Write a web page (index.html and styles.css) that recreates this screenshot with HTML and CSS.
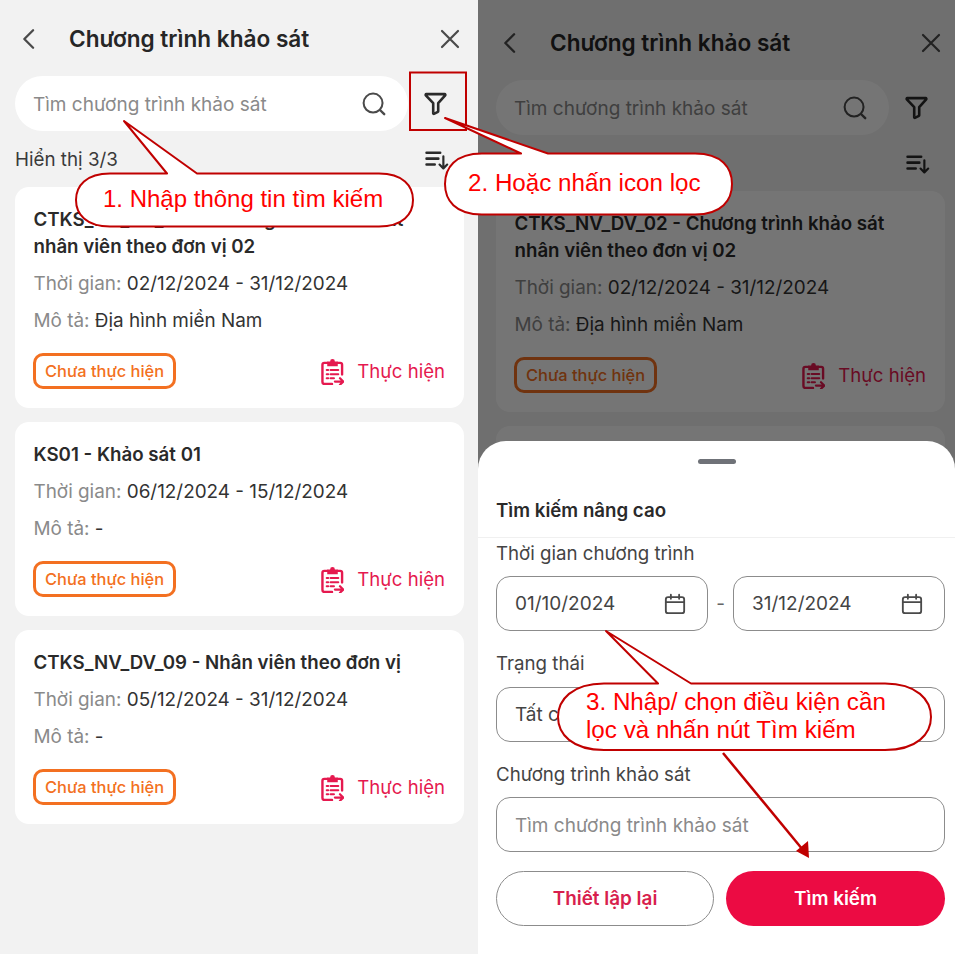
FILE: index.html
```html
<!DOCTYPE html>
<html lang="vi">
<head>
<meta charset="utf-8">
<title>Chương trình khảo sát</title>
<link rel="stylesheet" href="styles.css">
</head>
<body>
<svg class="defs" width="0" height="0" aria-hidden="true">
  <symbol id="i-back" viewBox="0 0 24 24"><path d="M15.5 4.5 8 12l7.5 7.5" fill="none" stroke="currentColor" stroke-width="2" stroke-linecap="round" stroke-linejoin="round"/></symbol>
  <symbol id="i-close" viewBox="0 0 24 24"><path d="M4 4l16 16M20 4 4 20" fill="none" stroke="currentColor" stroke-width="2.2" stroke-linecap="round"/></symbol>
  <symbol id="i-search" viewBox="0 0 28 28"><circle cx="13" cy="13" r="10.2" fill="none" stroke="currentColor" stroke-width="2.2"/><path d="M21 21l4 4" fill="none" stroke="currentColor" stroke-width="2.6" stroke-linecap="round"/></symbol>
  <symbol id="i-filter" viewBox="0 0 24 24"><path d="M3.2 3h17.6c.6 0 .9.7.5 1.100L14.600 11.700v7.800c0 .3-.1.500-.3.600l-3.800 1.800c-.3.100-.7-.1-.7-.5V11.700L2.700 4.100C2.300 3.700 2.600 3 3.200 3Z" fill="none" stroke="currentColor" stroke-width="2.5" stroke-linejoin="round"/></symbol>
  <symbol id="i-sort" viewBox="0 0 26 22"><path d="M1.500 3h15M1.500 9.500h13M1.500 16h9" fill="none" stroke="currentColor" stroke-width="2.800" stroke-linecap="round"/><path d="M20 7v13M15.800 16l4.200 4.300 4.200-4.300" fill="none" stroke="currentColor" stroke-width="2.400" stroke-linecap="round" stroke-linejoin="round"/></symbol>
  <symbol id="i-task" viewBox="0 0 24 28"><path d="M7 5H3.500C2.300 5 1.500 5.800 1.500 7v18c0 1.100.8 2 2 2h8M17 5h3c1.100 0 2 .8 2 2v10" fill="none" stroke="currentColor" stroke-width="2.500" stroke-linecap="round"/><path d="M6.500 3.500h3a2.500 2.500 0 0 1 5 0h3V8.500h-11Z" fill="currentColor"/><path d="M6 12.500h1.500M10 12.500h8M6 16.800h1.500M10 16.800h8M6 21h1.500M10 21h3.500" fill="none" stroke="currentColor" stroke-width="2.200" stroke-linecap="round"/><path d="M14.500 24.500h8.500M19.800 21l3.500 3.500-3.500 3.300" fill="none" stroke="currentColor" stroke-width="2.300" stroke-linecap="round" stroke-linejoin="round"/></symbol>
  <symbol id="i-cal" viewBox="0 0 24 24"><rect x="2" y="4.500" width="20" height="17.500" rx="2.500" fill="none" stroke="currentColor" stroke-width="2"/><path d="M2 10h20M7.500 1.800v4.500M16.500 1.800v4.500" fill="none" stroke="currentColor" stroke-width="2" stroke-linecap="round"/></symbol>
</svg>

<main class="page">
  <section class="screen screen-list">
    <header class="topbar">
      <svg class="ic ic-back"><use href="#i-back"/></svg>
      <h1 class="topbar-title">Chương trình khảo sát</h1>
      <svg class="ic ic-close"><use href="#i-close"/></svg>
    </header>
    <div class="searchrow">
      <div class="searchbox"><span class="placeholder">Tìm chương trình khảo sát</span><svg class="ic ic-search"><use href="#i-search"/></svg></div>
      <svg class="ic ic-filter"><use href="#i-filter"/></svg>
    </div>
    <div class="listhead"><span>Hiển thị 3/3</span><svg class="ic ic-sort"><use href="#i-sort"/></svg></div>
    <div class="cards">
      <article class="card">
        <h2 class="card-title">CTKS_NV_DV_02 - Chương trình khảo sát nhân viên theo đơn vị 02</h2>
        <p class="meta"><span class="muted">Thời gian:</span> 02/12/2024 - 31/12/2024</p>
        <p class="meta"><span class="muted">Mô tả:</span> Địa hình miền Nam</p>
        <div class="card-foot"><span class="chip">Chưa thực hiện</span><span class="action"><svg class="ic ic-task"><use href="#i-task"/></svg>Thực hiện</span></div>
      </article>
      <article class="card">
        <h2 class="card-title">KS01 - Khảo sát 01</h2>
        <p class="meta"><span class="muted">Thời gian:</span> 06/12/2024 - 15/12/2024</p>
        <p class="meta"><span class="muted">Mô tả:</span> -</p>
        <div class="card-foot"><span class="chip">Chưa thực hiện</span><span class="action"><svg class="ic ic-task"><use href="#i-task"/></svg>Thực hiện</span></div>
      </article>
      <article class="card">
        <h2 class="card-title">CTKS_NV_DV_09 - Nhân viên theo đơn vị</h2>
        <p class="meta"><span class="muted">Thời gian:</span> 05/12/2024 - 31/12/2024</p>
        <p class="meta"><span class="muted">Mô tả:</span> -</p>
        <div class="card-foot"><span class="chip">Chưa thực hiện</span><span class="action"><svg class="ic ic-task"><use href="#i-task"/></svg>Thực hiện</span></div>
      </article>
    </div>
  </section>

  <section class="screen screen-filter">
    <header class="topbar">
      <svg class="ic ic-back"><use href="#i-back"/></svg>
      <h1 class="topbar-title">Chương trình khảo sát</h1>
      <svg class="ic ic-close"><use href="#i-close"/></svg>
    </header>
    <div class="searchrow">
      <div class="searchbox"><span class="placeholder">Tìm chương trình khảo sát</span><svg class="ic ic-search"><use href="#i-search"/></svg></div>
      <svg class="ic ic-filter"><use href="#i-filter"/></svg>
    </div>
    <div class="listhead"><span>Hiển thị 3/3</span><svg class="ic ic-sort"><use href="#i-sort"/></svg></div>
    <div class="cards">
      <article class="card">
        <h2 class="card-title">CTKS_NV_DV_02 - Chương trình khảo sát nhân viên theo đơn vị 02</h2>
        <p class="meta"><span class="muted">Thời gian:</span> 02/12/2024 - 31/12/2024</p>
        <p class="meta"><span class="muted">Mô tả:</span> Địa hình miền Nam</p>
        <div class="card-foot"><span class="chip">Chưa thực hiện</span><span class="action"><svg class="ic ic-task"><use href="#i-task"/></svg>Thực hiện</span></div>
      </article>
      <article class="card card-stub"></article>
    </div>
    <div class="scrim"></div>
    <div class="sheet">
      <div class="handle"></div>
      <h2 class="sheet-title">Tìm kiếm nâng cao</h2>
      <form class="sheet-body">
        <div class="field-label first">Thời gian chương trình</div>
        <div class="dates">
          <div class="input"><span>01/10/2024</span><svg class="ic ic-cal"><use href="#i-cal"/></svg></div>
          <span class="dash">-</span>
          <div class="input"><span>31/12/2024</span><svg class="ic ic-cal"><use href="#i-cal"/></svg></div>
        </div>
        <div class="field-label">Trạng thái</div>
        <div class="input"><span>Tất cả</span></div>
        <div class="field-label tight">Chương trình khảo sát</div>
        <div class="input input-low"><span class="placeholder">Tìm chương trình khảo sát</span></div>
        <div class="buttons">
          <button type="button" class="btn btn-ghost">Thiết lập lại</button>
          <button type="button" class="btn btn-solid">Tìm kiếm</button>
        </div>
      </form>
    </div>
  </section>

  <svg class="annot" viewBox="0 0 955 954" aria-hidden="true">
    <rect class="annot-line" x="410" y="72.500" width="56" height="57.500"/>
    <path class="annot-bubble" d="M124 121 167 173.500H110C86 173.500 76 186 76 200S86 226.500 110 226.500H379C403 226.500 413 214 413 200S403 173.500 379 173.500H197Z"/>
    <path class="annot-bubble" d="M445 118 521 153.500H482C455 153.500 445 168 445 184S455 214.500 482 214.500H695C722 214.500 732 200 732 184S722 153.500 695 153.500H548Z"/>
    <path class="annot-bubble" d="M606 631 658 683.500H604C572 683.500 558 700 558 717S572 750 604 750H885C917 750 931 734 931 717S917 683.500 885 683.500H691Z"/>
    <path class="annot-arrow" d="M723 753 803 850"/>
    <path class="annot-head" d="M809 858 796 851 808 841Z"/>
  </svg>
  <p class="note note-1">1. Nhập thông tin tìm kiếm</p>
  <p class="note note-2">2. Hoặc nhấn icon lọc</p>
  <p class="note note-3">3. Nhập/ chọn điều kiện cần<br>lọc và nhấn nút Tìm kiếm</p>
</main>
</body>
</html>
```

FILE: styles.css
```css
* { box-sizing: border-box; }
html, body { margin: 0; padding: 0; }
body { width: 955px; height: 954px; overflow: hidden; background: #f2f2f2; font-family: Inter, "Noto Sans", sans-serif; color: #262626; }
.defs { position: absolute; }
h1, h2, p { margin: 0; }
.page { position: relative; display: flex; width: 955px; height: 954px; overflow: hidden; }
.ic { display: block; flex: none; }

.screen { position: relative; height: 954px; background: #f2f2f2; overflow: hidden; }
.screen-list { width: 478px; padding: 20px 14px 0 15px; }
.screen-filter { width: 477px; padding: 24px 10px 0 18px; }

.topbar { display: flex; align-items: center; height: 38px; }
.ic-back { width: 28px; height: 28px; color: #4a4a4a; }
.topbar-title { margin-left: 26px; flex: 1; font-size: 22.600px; font-weight: 600; line-height: 40px; color: #262626; }
.ic-close { width: 24px; height: 24px; color: #4a4a4a; margin-right: 2px; }

.searchrow { display: flex; align-items: center; margin-top: 18px; }
.searchbox { display: flex; align-items: center; justify-content: space-between; width: 393px; height: 55px; padding: 2px 21px 0 18px; background: #fff; border-radius: 28px; }
.placeholder { font-size: 19px; color: #8a8a8a; }
.ic-search { width: 26px; height: 26px; margin-top: -2px; color: #4a4a4a; }
.ic-filter { width: 25px; height: 25px; margin-left: 15px; color: #2b2b2b; }

.listhead { display: flex; align-items: center; justify-content: space-between; height: 27px; margin-top: 15px; font-size: 18.800px; color: #3a3a3a; }
.ic-sort { width: 24px; height: 20px; margin-right: 15px; color: #2b2b2b; }

.cards { display: flex; flex-direction: column; gap: 14px; margin-top: 14px; }
.card { padding: 19px 19px 19px 18.500px; background: #fff; border-radius: 14px; }
.card-stub { height: 194px; }
.card-title { font-size: 18.700px; font-weight: 600; line-height: 27px; color: #2a2a2a; }
.meta { margin-top: 11px; font-size: 18.900px; line-height: 26px; color: #333; }
.muted { color: #8a8a8a; }
.card-foot { display: flex; align-items: center; justify-content: space-between; margin-top: 19px; margin-left: -0.500px; }
.chip { display: flex; align-items: center; height: 36px; padding: 0 9px; border: 3px solid #f37021; border-radius: 10px; font-size: 16.400px; font-weight: 500; color: #f37021; }
.action { display: flex; align-items: center; gap: 13px; font-size: 18.600px; color: #e5194f; }
.ic-task { width: 23px; height: 27px; }

.scrim { position: absolute; inset: 0; background: rgba(0, 0, 0, .54); }
.sheet { position: absolute; left: 0; right: 0; top: 441px; bottom: 0; background: #fff; border-radius: 28px 28px 0 0; }
.handle { width: 38px; height: 5px; margin: 18px auto 0; background: #6f7278; border-radius: 3px; }
.sheet-title { padding: 34px 18px 13px; border-bottom: 1.500px solid #f0f0f0; font-size: 18.700px; font-weight: 600; line-height: 26px; color: #2a2a2a; }
.sheet-body { padding: 0 10px 0 18px; }
.field-label { margin: 20px 0 10px; font-size: 18.700px; line-height: 26px; color: #444; }
.field-label.first { margin: 3px 0 9px; }
.field-label.tight { margin: 20px 0 9px; }
.input { display: flex; align-items: center; justify-content: space-between; height: 55px; padding: 0 21px 0 18px; border: 1.500px solid #8c8c8c; border-radius: 14px; font-size: 19px; color: #444; }
.input-low { padding-top: 2px; }
.dates { display: grid; grid-template-columns: 212px 25px 212px; align-items: center; }
.dash { text-align: center; font-size: 19px; color: #666; }
.ic-cal { width: 22px; height: 22px; color: #4a4a4a; }
.buttons { display: flex; gap: 12px; margin-top: 19px; }
.btn { height: 55px; border-radius: 28px; font: 600 18.900px Inter, "Noto Sans", sans-serif; }
.btn-ghost { width: 218px; background: #fff; border: 1.500px solid #8c8c8c; color: #d81f4e; }
.btn-solid { width: 219px; background: #ec0b43; border: 0; color: #fff; }

.annot { position: absolute; left: 0; top: 0; width: 955px; height: 954px; }
.annot-line { fill: none; stroke: #c00000; stroke-width: 2; }
.annot-bubble { fill: #fff; stroke: #c00000; stroke-width: 2; stroke-linejoin: round; }
.annot-arrow { fill: none; stroke: #c00000; stroke-width: 2.500; }
.annot-head { fill: #c00000; }
.note { position: absolute; font-family: "Liberation Sans", Arial, sans-serif; color: #ff0000; white-space: nowrap; font-size: 24.200px; line-height: 28px; }
.note-1 { left: 103px; top: 185px; font-size: 24px; }
.note-2 { left: 468px; top: 169px; }
.note-3 { left: 586px; top: 688px; }
```
